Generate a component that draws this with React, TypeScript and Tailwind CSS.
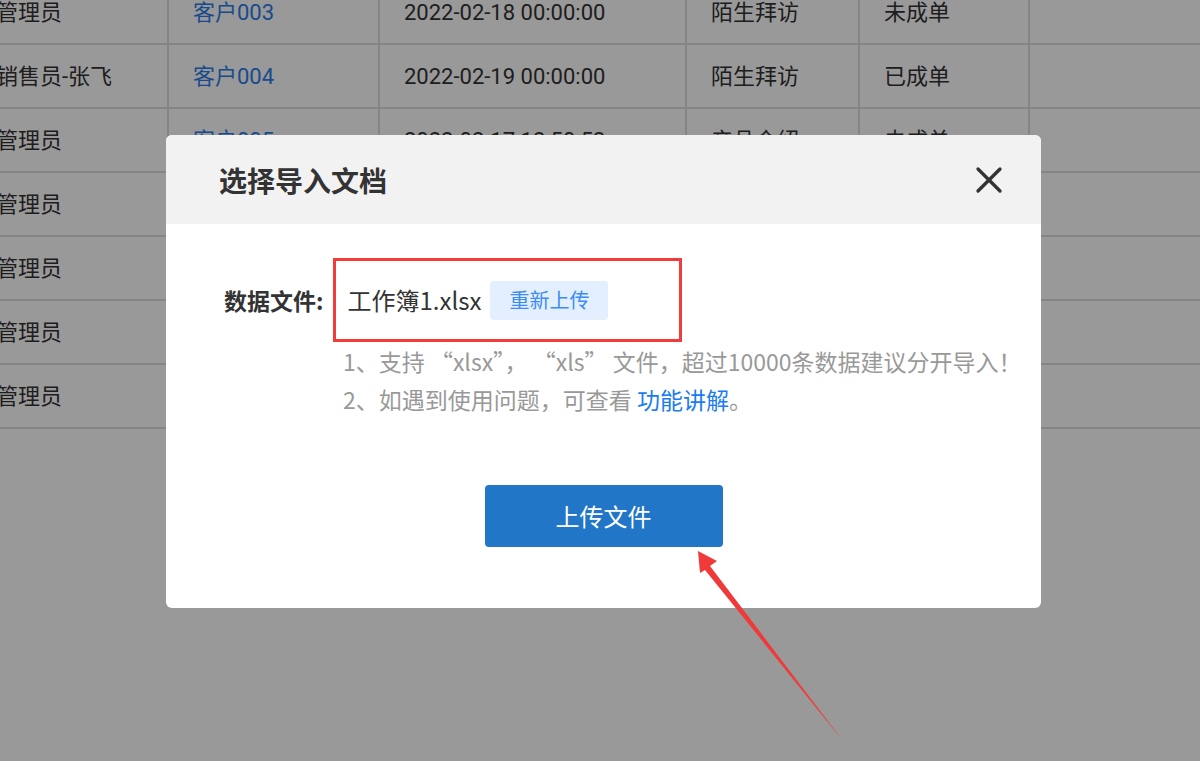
import { X } from 'lucide-react'

type Row = {
  owner: string
  customer: string
  time: string
  kind: string
  state: string
}

const rows: Row[] = [
  { owner: '管理员', customer: '客户003', time: '2022-02-18 00:00:00', kind: '陌生拜访', state: '未成单' },
  { owner: '销售员-张飞', customer: '客户004', time: '2022-02-19 00:00:00', kind: '陌生拜访', state: '已成单' },
  { owner: '管理员', customer: '客户005', time: '2022-02-17 12:50:53', kind: '产品介绍', state: '未成单' },
  { owner: '管理员', customer: '客户006', time: '2022-02-17 12:50:53', kind: '产品介绍', state: '未成单' },
  { owner: '管理员', customer: '客户007', time: '2022-02-17 12:50:53', kind: '产品介绍', state: '未成单' },
  { owner: '管理员', customer: '客户008', time: '2022-02-17 12:50:53', kind: '产品介绍', state: '未成单' },
  { owner: '管理员', customer: '客户009', time: '2022-02-17 12:50:53', kind: '产品介绍', state: '未成单' },
]

const cell = 'flex items-center border-r-2 border-[#dedede] pl-[24px] shrink-0'

function RecordTable() {
  return (
    <div
      className="-mt-[19px] -ml-[28px] flex flex-col text-[22px] text-[#333]"
      style={{ fontFamily: 'Roboto, "Noto Sans CJK SC", sans-serif' }}
    >
      {rows.map((r, i) => (
        <div key={i} className="flex h-[64px] border-b-2 border-[#dedede] w-[1400px]">
          <div className={`${cell} w-[197px]`}>{r.owner}</div>
          <div className={`${cell} w-[211px] text-[#2b7de9]`}>{r.customer}</div>
          <div className={`${cell} w-[307px]`}>{r.time}</div>
          <div className={`${cell} w-[173px]`}>{r.kind}</div>
          <div className={`${cell} w-[170px]`}>{r.state}</div>
          <div className={`${cell} w-[300px]`}></div>
        </div>
      ))}
    </div>
  )
}

function Arrow() {
  return (
    <svg
      className="absolute left-0 top-0 pointer-events-none"
      width="1200"
      height="761"
      viewBox="0 0 1200 761"
    >
      <polygon
        points="698,551 717,561 710,566 843,741 705,570 700,573"
        fill="#f03a3a"
      />
    </svg>
  )
}

export default function App() {
  return (
    <div
      className="relative w-[1200px] h-[761px] overflow-hidden bg-white"
      style={{ fontFamily: '"Noto Sans CJK SC", "Noto Sans", sans-serif' }}
    >
      <RecordTable />

      <div className="absolute inset-0 bg-black/40 pt-[135px] pl-[166px]">
        <div className="w-[875px] h-[473px] bg-white rounded-[6px] overflow-hidden flex flex-col">
          <div className="h-[89px] bg-[#f2f2f2] flex items-center justify-between pl-[53px] pr-[30px]">
            <h2 className="text-[28px] font-bold text-[#333] leading-none">选择导入文档</h2>
            <X size={44} strokeWidth={1.8} className="text-[#333]" />
          </div>

          <div className="flex flex-col pt-[34px]">
            <div className="flex items-center pl-[58px]">
              <span className="text-[23px] font-bold text-[#333] leading-none">数据文件:</span>
              <div className="ml-[10px] w-[349px] h-[84px] border-[3px] border-[#f23c3c] flex items-center pl-[11px]">
                <span className="text-[24px] text-[#333] leading-none">工作簿1.xlsx</span>
                <button className="ml-[9px] w-[118px] h-[39px] rounded-[4px] bg-[#e3efff] text-[#3d8cf0] text-[20px] leading-none">
                  重新上传
                </button>
              </div>
            </div>

            <div className="pl-[177px] text-[23px] text-[#999] leading-[38px]">
              <p>1、支持 “xlsx”， “xls” 文件，超过10000条数据建议分开导入！</p>
              <p>
                2、如遇到使用问题，可查看 <span className="text-[#1a7cf0]">功能讲解</span>。
              </p>
            </div>

            <div className="flex justify-center pt-[67px]">
              <button className="w-[238px] h-[62px] rounded-[4px] bg-[#2176c7] text-white text-[24px] leading-none">
                上传文件
              </button>
            </div>
          </div>
        </div>
      </div>

      <Arrow />
    </div>
  )
}
